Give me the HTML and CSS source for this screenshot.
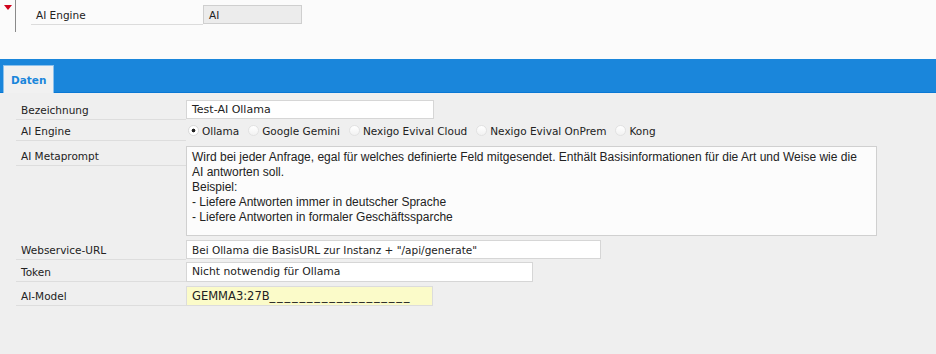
FILE: index.html
```html
<!DOCTYPE html>
<html lang="de">
<head>
    <meta charset="UTF-8">
    <title>AI Engine</title>
    <link rel="stylesheet" href="styles.css">
</head>
<body>
    <div class="head">
        <span class="collapse"></span>
        <div class="head-row">
            <span class="head-label">AI Engine</span>
            <span class="head-value">AI</span>
        </div>
    </div>

    <div class="tabbar">
        <div class="tab">Daten</div>
    </div>

    <div class="form">
        <div class="label">Bezeichnung</div>
        <div class="field"><div class="input w-name">Test-AI Ollama</div></div>

        <div class="label">AI Engine</div>
        <div class="field radios">
            <span class="radio checked">Ollama</span>
            <span class="radio">Google Gemini</span>
            <span class="radio">Nexigo Evival Cloud</span>
            <span class="radio">Nexigo Evival OnPrem</span>
            <span class="radio">Kong</span>
        </div>

        <div class="label">AI Metaprompt</div>
        <div class="field">
            <div class="textarea">Wird bei jeder Anfrage, egal für welches definierte Feld mitgesendet. Enthält Basisinformationen für die Art und Weise wie die AI antworten soll.<br>Beispiel:<br>- Liefere Antworten immer in deutscher Sprache<br>- Liefere Antworten in formaler Geschäftssparche</div>
        </div>

        <div class="label">Webservice-URL</div>
        <div class="field"><div class="input w-url">Bei Ollama die BasisURL zur Instanz + "/api/generate"</div></div>

        <div class="label">Token</div>
        <div class="field"><div class="input w-token">Nicht notwendig für Ollama</div></div>

        <div class="label">AI-Model</div>
        <div class="field"><div class="input w-model required">GEMMA3:27B<span class="mask">___________________</span></div></div>
    </div>
</body>
</html>
```

FILE: styles.css
```css
body {
    margin: 0;
    background-color: #efefef;
    font-family: "DejaVu Sans", Verdana, sans-serif;
    font-size: 10.5px;
    color: #222;
}

/* kopfbereich */
.head {
    position: relative;
    height: 59px;
    background-color: #fbfbfb;
}
.collapse {
    position: absolute;
    left: 4px;
    top: 5px;
    width: 0;
    height: 0;
    border-left: 4px solid transparent;
    border-right: 4px solid transparent;
    border-top: 5px solid #d0021b;
}
.head::before {
    content: "";
    position: absolute;
    left: 15px;
    top: 0;
    width: 1px;
    height: 32px;
    background-color: #8a8a8a;
}
.head-row {
    display: flex;
    align-items: flex-start;
    padding: 5px 0 0 31px;
}
.head-label {
    width: 167px;
    height: 19px;
    line-height: 20px;
    padding-left: 5px;
    border-bottom: 1px solid #dcdcdc;
}
.head-value {
    width: 92px;
    height: 17px;
    line-height: 18px;
    padding-left: 5px;
    background-color: #ececec;
    border: 1px solid #cfcfcf;
}

/* reiter */
.tabbar {
    height: 33px;
    background-color: #1a86db;
    border-bottom: 1px solid #0a78d4;
    padding-left: 3px;
    display: flex;
    align-items: flex-end;
}
.tab {
    width: 42px;
    height: 27px;
    margin-bottom: -1px;
    padding-left: 7px;
    line-height: 28px;
    background-color: #f1f1f1;
    border: 1px solid #8cc1ec;
    border-bottom: none;
    color: #1a86db;
    font-weight: bold;
    font-size: 10.5px;
}

/* formular */
.form {
    display: grid;
    grid-template-columns: 170px 1fr;
    grid-template-rows: 21px 25px 94px 22px 24px 20px;
    padding: 7px 0 0 16px;
}
.label {
    padding-left: 5px;
    line-height: 20px;
    border-bottom: 1px solid #dddddd;
    height: 19px;
}
.field {
    min-width: 0;
}
.input {
    box-sizing: border-box;
    height: 19px;
    line-height: 18px;
    padding-left: 5px;
    background-color: #ffffff;
    border: 1px solid #d6d6d6;
    white-space: nowrap;
    overflow: hidden;
}
.w-name { width: 248px; font-size: 11px; }
.w-url { width: 415px; }
.w-token { width: 347px; height: 20px; font-size: 10.8px; }
.w-model { width: 247px; height: 20px; font-size: 11.5px; }
.required {
    background-color: #fbfbc9;
    border-color: #dcdcdc;
}
.mask {
    letter-spacing: 1.7px;
}
.textarea {
    box-sizing: border-box;
    width: 691px;
    height: 90px;
    padding: 3px 14px 3px 5px;
    background-color: #fcfcfc;
    border: 1px solid #d0d0d0;
    font-family: "Liberation Sans", Arial, sans-serif;
    font-size: 12px;
    line-height: 15px;
}

/* optionsfelder */
.radios {
    display: flex;
    align-items: center;
    gap: 9px;
    padding-left: 2px;
    height: 19px;
}
.radio {
    display: flex;
    align-items: center;
    gap: 3px;
}
.radio::before {
    content: "";
    box-sizing: border-box;
    width: 11px;
    height: 11px;
    border-radius: 50%;
    border: 1px solid #e2e2e2;
    background: linear-gradient(#ffffff, #f2f2f2);
}
.radio.checked::before {
    background: radial-gradient(circle, #222 0 1.6px, #ffffff 2.2px);
    border-color: #dadada;
}
```
